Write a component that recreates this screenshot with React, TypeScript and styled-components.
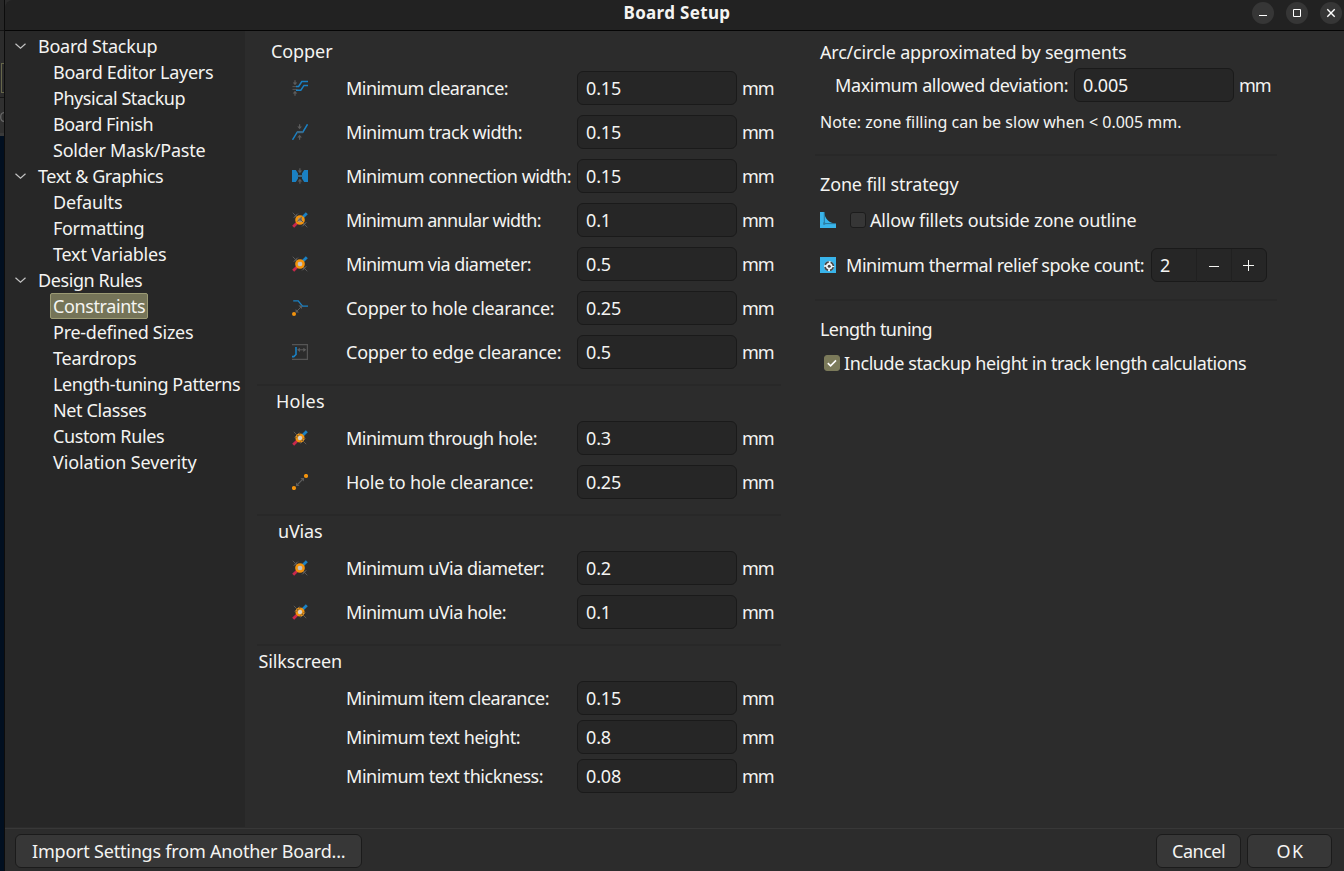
import React, { useLayoutEffect, useRef, useState } from "react";
import styled, { createGlobalStyle, css } from "styled-components";

const GlobalStyle = createGlobalStyle`
  * { box-sizing: border-box; }
  html, body { margin: 0; padding: 0; background: #2c2c2c; overflow: hidden; }
  body {
    font-family: "Noto Sans", "Open Sans", sans-serif;
    font-size: 18px;
    line-height: 26px;
    color: #f4f4f2;
  }
`;

const Screen = styled.div`
  display: flex;
  width: 1344px;
  height: 871px;
`;

/* Sliver of the editor window that shows behind the dialog */
const Backdrop = styled.div`
  display: flex;
  flex-direction: column;
  width: 5px;
  flex: none;
  background: #010f20;
  border-right: 1px solid #0c0c0c;
`;
const BackTop = styled.div`
  height: 31px;
  background: #272727;
  border-bottom: 1px solid #141414;
`;
const BackTools = styled.div`
  height: 67px;
  padding: 32px 0 0 1px;
  background: #2c2c2c;
  border-bottom: 1px solid #161616;
`;
const BackField = styled.div`
  height: 30px;
  border: 1px solid #66664a;
  border-right: 0;
`;
const BackLabel = styled.div`
  display: flex;
  height: 38px;
  padding-top: 13px;
  background: #303030;
  border-bottom: 3px solid #3a3a3a;
`;

const Dialog = styled.div`
  display: flex;
  flex-direction: column;
  flex: 1;
  background: #2c2c2c;
`;

const TitleBar = styled.header`
  display: grid;
  grid-template-columns: 1fr auto 1fr;
  height: 31px;
  flex: none;
  padding: 0 2px 5px 0;
  align-items: center;
  background: #222;
  border-bottom: 1px solid #050505;
  border-radius: 8px 0 0 0;
`;
const Title = styled.h1`
  grid-column: 2;
  margin: 0;
  padding-left: 6px;
  font-size: 17px;
  line-height: 25px;
  font-weight: 700;
`;
const WindowButtons = styled.div`
  display: flex;
  justify-content: flex-end;
  gap: 12px;
`;
const WindowButton = styled.button`
  display: grid;
  place-items: center;
  width: 22px;
  height: 22px;
  padding: 0;
  border: 0;
  border-radius: 50%;
  background: #363636;
  color: #fff;
`;

const Body = styled.div`
  display: flex;
  height: 797px;
  flex: none;
  border-bottom: 1px solid #2c2c2c;
`;
const Sidebar = styled.nav`
  width: 240px;
  flex: none;
  padding-top: 2px;
  background: #272727;
`;
const TreeRow = styled.div<{ $child?: boolean }>`
  display: flex;
  align-items: center;
  height: 26px;
  padding-left: ${(p) => (p.$child ? 45 : 9)}px;
  gap: 10px;
`;
const TreeLabel = styled.span<{ $selected?: boolean; $child?: boolean }>`
  display: flex;
  height: 26px;
  padding: 0 ${(p) => (p.$child ? 2 : 0)}px;
  border-radius: 2px;
  ${(p) =>
    p.$selected &&
    css`
      line-height: 24px;
      padding: 0 1px;
      background: #757458;
      border: 1px solid #9b9a74;
    `}
`;

const Content = styled.main`
  display: flex;
  flex: 1;
  gap: 34px;
  padding: 7px 0 0 12px;
`;
const LeftColumn = styled.div`
  width: 524px;
  flex: none;
`;
const RightColumn = styled.div`
  width: 462px;
  flex: none;
  padding-top: 1px;
`;
const Separator = styled.hr<{ $top: number; $bottom: number }>`
  height: 2px;
  margin: ${(p) => `${p.$top}px 0 ${p.$bottom}px`};
  border: 0;
  background: #282828;
`;

const GroupHeading = styled.h2<{ $indent?: number }>`
  display: flex;
  justify-content: center;
  width: 86px;
  margin: 0 0 7px;
  padding-left: ${(p) => p.$indent ?? 0}px;
  font-size: 18px;
  line-height: 26px;
  font-weight: 400;
`;
const Rows = styled.div<{ $gap: number }>`
  display: flex;
  flex-direction: column;
  gap: ${(p) => p.$gap}px;
`;
const Row = styled.label`
  display: grid;
  grid-template-columns: 86px 234px 160px auto;
  align-items: center;
  height: 34px;
`;
const RowIcon = styled.span`
  display: grid;
  place-items: center;
`;
const RowLabel = styled.span`
  display: flex;
  padding-left: 2px;
`;
const Field = styled.input`
  width: 160px;
  height: 34px;
  padding: 0 8px 0 8px;
  border: 1px solid #1a1a1a;
  border-radius: 6px;
  outline: 0;
  background: #262626;
  color: inherit;
  font: inherit;
  letter-spacing: -0.15px;
`;
const Unit = styled.span`
  display: flex;
  padding-left: 4px;
`;

const SideHeading = styled.h2`
  display: flex;
  margin: 0;
  padding-left: 4px;
  font-size: 18px;
  line-height: 26px;
  font-weight: 400;
`;
const DeviationRow = styled.label`
  display: flex;
  align-items: center;
  height: 34px;
  margin-top: 3px;
  padding-left: 19px;
  gap: 5px;
`;
const DeviationUnit = styled.span`
  display: flex;
  margin-left: -1px;
`;
const Note = styled.p`
  display: flex;
  margin: 7px 0 0;
  padding-left: 4px;
  font-size: 16px;
`;
const FilletRow = styled.label`
  display: flex;
  align-items: center;
  height: 26px;
  margin-top: 10px;
  padding-left: 5px;
`;
const CheckBox = styled.span<{ $checked?: boolean; $before: number }>`
  display: grid;
  place-items: center;
  width: 16px;
  height: 16px;
  margin: 0 3px 0 ${(p) => p.$before}px;
  border: 1px solid ${(p) => (p.$checked ? "#7b7a5a" : "#1c1c1c")};
  border-radius: 3px;
  background: ${(p) => (p.$checked ? "#7b7a5a" : "#363636")};
`;
const SpokeRow = styled.label`
  display: flex;
  align-items: center;
  height: 34px;
  margin-top: 15px;
  padding-left: 5px;
`;
const SpokeLabel = styled.span`
  display: flex;
  padding: 0 6px 0 9px;
`;
const Spinner = styled.span`
  display: grid;
  grid-template-columns: 44px 35px 35px;
  width: 116px;
  height: 34px;
  border: 1px solid #1a1a1a;
  border-radius: 6px;
  background: #262626;
  line-height: 33px;
`;
const SpinValue = styled.span`
  padding-left: 8px;
`;
const SpinButton = styled.span`
  display: grid;
  place-items: center;
  border-left: 1px solid #202020;
`;
const StackupRow = styled.label`
  display: flex;
  align-items: center;
  height: 26px;
  margin-top: 8px;
`;

const Footer = styled.footer`
  display: flex;
  flex: 1;
  align-items: flex-start;
  gap: 6px;
  padding: 5px 12px 0 10px;
  border-top: 1px solid #383838;
`;
const Button = styled.button<{ $width: number; $pushed?: boolean }>`
  display: flex;
  align-items: center;
  justify-content: center;
  width: ${(p) => p.$width}px;
  height: 34px;
  padding: 0;
  margin-left: ${(p) => (p.$pushed ? "auto" : "0")};
  border: 1px solid #1b1b1b;
  border-radius: 6px;
  background: #373737;
  color: inherit;
  font: inherit;
`;

const Line = styled.span`
  display: block;
  margin: 0 1px;
  white-space: nowrap;
`;

/* One line of text whose tracking is adjusted to occupy the given width,
   which includes one pixel of margin at either side */
function Fit({ width, children }: { width: number; children: string }) {
  const ref = useRef<HTMLSpanElement>(null);
  const [spacing, setSpacing] = useState(0);
  const inner = width - 2;
  useLayoutEffect(() => {
    const el = ref.current;
    if (!el) return;
    const range = document.createRange();
    range.selectNodeContents(el);
    const natural = range.getBoundingClientRect().width;
    setSpacing((inner + 0.6 - natural) / Math.max(1, children.length - 1));
  }, [inner, children]);
  return (
    <Line ref={ref} style={{ width: inner, letterSpacing: spacing }}>
      {children}
    </Line>
  );
}

const BLUE = "#1a81c4";
const ORANGE = "#f2930d";
const RED = "#c8284b";
const GREY = "#5c5c5c";

const Svg = ({ children }: { children: React.ReactNode }) => (
  <svg width="16" height="16" viewBox="0 0 16 16" fill="none">
    {children}
  </svg>
);

const Chevron = () => (
  <svg width="13" height="8" viewBox="0 0 13 8" fill="none">
    <path d="M1.5 1.8 6.5 6.2 11.5 1.8" stroke="#c4c4c4" strokeWidth="1.2" />
  </svg>
);

const PinchArrows = ({ x }: { x: number }) => (
  <g transform={`translate(${x} 0)`} fill={GREY}>
    <path d="M-.6 .3h1.2v2.2H2.3L0 5.2-2.3 2.5H-.6z" />
    <path d="M-.6 15.7h1.2v-2.2H2.3L0 10.8-2.3 13.5H-.6z" />
  </g>
);

const ClearanceIcon = () => (
  <Svg>
    <PinchArrows x={3} />
    <path d="M.5 6.6h5M.5 9.4h5" stroke={GREY} strokeWidth=".9" />
    <path d="M4 6.5h2.6L9.8 1.5H16M4 10.2h4.8L12 5.4H16" stroke={BLUE} strokeWidth="1.5" />
  </Svg>
);
const TrackIcon = () => (
  <Svg>
    <PinchArrows x={7.6} />
    <path d="M.5 15.8 5.2 8.2h5.6L15.5.3" stroke={BLUE} strokeWidth="1.5" />
    <path d="M5 8.1h6" stroke="#3c6a88" strokeWidth="2.2" />
  </Svg>
);
const ConnectionIcon = () => (
  <Svg>
    <path d="M0 2h3.8L6 5.5v5L3.8 14H0zM16 2h-3.8L10 5.5v5l2.2 3.5H16z" fill={BLUE} />
    <path d="M5.5 7h5v2h-5z" fill="#3d6a86" />
    <PinchArrows x={7.9} />
  </Svg>
);

const Diagonal = () => (
  <>
    <path d="M1.2 14.8 8 8" stroke={RED} strokeWidth="2.8" />
    <path d="M8 8 14.8 1.2" stroke={BLUE} strokeWidth="2.8" />
  </>
);
const CornerHatch = () => (
  <>
    <path d="M1.5 6 6 1.5M10 14.5 14.5 10M.7.7 4 4M15.3 15.3 12 12" stroke={GREY} strokeWidth=".9" />
    <path d="M4.8 1.8v3H1.8zM11.2 14.2v-3h3z" fill={GREY} />
  </>
);
const AnnularIcon = () => (
  <Svg>
    <CornerHatch />
    <Diagonal />
    <circle cx="8" cy="8" r="3.6" fill="#a9977d" stroke={ORANGE} strokeWidth="2.4" />
    <path d="M5.2 9.6 10 4.6M8.2 7.2l3 3" stroke="#5e574d" strokeWidth="1" />
    <path d="M9.6 5.8v2.6H6.8z" fill="#5b5b5b" />
  </Svg>
);
const ViaIcon = () => (
  <Svg>
    <CornerHatch />
    <Diagonal />
    <circle cx="8" cy="8" r="3.6" fill="#c3c3c3" stroke={ORANGE} strokeWidth="2.5" />
  </Svg>
);
const HoleIcon = () => (
  <Svg>
    <path d="M1.8 1.8 6 6M14.2 14.2 10 10M2.5 7.5l5-5M8.5 13.5l5-5" stroke={GREY} strokeWidth=".9" />
    <Diagonal />
    <circle cx="8" cy="8" r="3.4" fill="#d6d3cc" stroke={ORANGE} strokeWidth="2.4" />
    <path d="M4 8.2 8.2 4M7.8 12l4.2-4.2" stroke="#8a6429" strokeWidth=".8" />
    <path d="M3.6 3.6 5.9 5.9M12.4 12.4 10.1 10.1" stroke="#6b583c" strokeWidth="1" />
  </Svg>
);
const CopperHoleIcon = () => (
  <Svg>
    <path d="M1.2 .9h5l4.3 5.2H16" stroke={BLUE} strokeWidth="1.4" />
    <path d="M4.5 11.5 9 7" stroke={GREY} strokeWidth="1" />
    <path d="M10 5.5v3.6L6.4 5.5zM3.6 12.4V9l3.4 3.4z" fill={GREY} />
    <circle cx="2" cy="14" r="2" fill={ORANGE} />
  </Svg>
);
const CopperEdgeIcon = () => (
  <Svg>
    <path d="M0 .6h15.4v14.8H0" stroke="#555" strokeWidth="1.2" />
    <path d="M4 3v7.5L1.8 12.6H0" stroke={BLUE} strokeWidth="1.6" />
    <path d="M6.5 5.8h6" stroke={GREY} strokeWidth="1" />
    <path d="M5 5.8 8 3.7v4.2zM14.3 5.8l-3-2.1v4.2z" fill={GREY} />
  </Svg>
);
const HoleHoleIcon = () => (
  <Svg>
    <path d="M5 11 11 5" stroke={GREY} strokeWidth="1.1" />
    <path d="M12 4v3.6L8.4 4zM4 12V8.4L7.6 12z" fill={GREY} />
    <circle cx="14" cy="2" r="2.1" fill={ORANGE} />
    <circle cx="2" cy="14" r="2.1" fill={ORANGE} />
  </Svg>
);
const FilletIcon = () => (
  <Svg>
    <path d="M0 0h4.2C5 7 8.5 10.8 16 11.6V16H0z" fill="#39b4ea" />
    <path d="M4.3 0v11.6H16" stroke="#286f91" strokeWidth=".9" />
    <path d="M3.2 10.4h2v2.4h-2z" fill="#2d7ea3" />
  </Svg>
);
const ThermalIcon = () => (
  <Svg>
    <path d="M0 0h16v16H0z" fill="#39b4ea" />
    <circle cx="9.2" cy="9.2" r="5" fill="#eef3f5" />
    <circle cx="9.2" cy="9.2" r="4.2" stroke="#454545" strokeWidth="1.6" strokeDasharray="4.7 1.9" strokeDashoffset="-.95" />
    <circle cx="9.2" cy="9.2" r="1.5" fill="#404040" />
  </Svg>
);

type Limit = { label: string; width: number; value: string; icon?: React.FC };

const tree = [
  {
    label: "Board Stackup", width: 121,
    items: [["Board Editor Layers", 162], ["Physical Stackup", 134], ["Board Finish", 102], ["Solder Mask/Paste", 154]],
  },
  {
    label: "Text & Graphics", width: 127,
    items: [["Defaults", 71], ["Formatting", 93], ["Text Variables", 115]],
  },
  {
    label: "Design Rules", width: 106,
    items: [
      ["Constraints", 94], ["Pre-defined Sizes", 142], ["Teardrops", 85], ["Length-tuning Patterns", 189],
      ["Net Classes", 95], ["Custom Rules", 113], ["Violation Severity", 145],
    ],
  },
] as { label: string; width: number; items: [string, number][] }[];

const groups: { title: string; width: number; indent?: number; gap: number; rows: Limit[] }[] = [
  {
    title: "Copper", width: 63, indent: 3, gap: 10,
    rows: [
      { label: "Minimum clearance:", width: 164, value: "0.15", icon: ClearanceIcon },
      { label: "Minimum track width:", width: 178, value: "0.15", icon: TrackIcon },
      { label: "Minimum connection width:", width: 227, value: "0.15", icon: ConnectionIcon },
      { label: "Minimum annular width:", width: 197, value: "0.1", icon: AnnularIcon },
      { label: "Minimum via diameter:", width: 187, value: "0.5", icon: ViaIcon },
      { label: "Copper to hole clearance:", width: 210, value: "0.25", icon: CopperHoleIcon },
      { label: "Copper to edge clearance:", width: 217, value: "0.5", icon: CopperEdgeIcon },
    ],
  },
  {
    title: "Holes", width: 50, gap: 10,
    rows: [
      { label: "Minimum through hole:", width: 193, value: "0.3", icon: HoleIcon },
      { label: "Hole to hole clearance:", width: 189, value: "0.25", icon: HoleHoleIcon },
    ],
  },
  {
    title: "uVias", width: 46, gap: 10,
    rows: [
      { label: "Minimum uVia diameter:", width: 200, value: "0.2", icon: ViaIcon },
      { label: "Minimum uVia hole:", width: 162, value: "0.1", icon: HoleIcon },
    ],
  },
  {
    title: "Silkscreen", width: 85, gap: 5,
    rows: [
      { label: "Minimum item clearance:", width: 205, value: "0.15" },
      { label: "Minimum text height:", width: 176, value: "0.8" },
      { label: "Minimum text thickness:", width: 199, value: "0.08" },
    ],
  },
];

export default function App() {
  return (
    <Screen>
      <GlobalStyle />
      <Backdrop>
        <BackTop />
        <BackTools><BackField /></BackTools>
        <BackLabel>
          <svg width="4" height="12" viewBox="0 0 4 12" fill="none">
            <path d="M4 1.6C1.6 1.6.7 3.6.7 6S1.6 10.4 4 10.4" stroke="#666" strokeWidth="1.3" />
          </svg>
        </BackLabel>
      </Backdrop>
      <Dialog>
        <TitleBar>
          <Title><Fit width={108}>Board Setup</Fit></Title>
          <WindowButtons>
            <WindowButton aria-label="Minimize">
              <Svg><path d="M4 10.5h8" stroke="currentColor" /></Svg>
            </WindowButton>
            <WindowButton aria-label="Maximize">
              <Svg><path d="M4.5 4.5h7v7h-7z" stroke="currentColor" /></Svg>
            </WindowButton>
            <WindowButton aria-label="Close">
              <Svg><path d="m4.3 4.3 7.4 7.4m0-7.4-7.4 7.4" stroke="currentColor" strokeWidth="1.4" /></Svg>
            </WindowButton>
          </WindowButtons>
        </TitleBar>
        <Body>
          <Sidebar>
            {tree.map((branch) => (
              <React.Fragment key={branch.label}>
                <TreeRow>
                  <Chevron />
                  <TreeLabel><Fit width={branch.width}>{branch.label}</Fit></TreeLabel>
                </TreeRow>
                {branch.items.map(([label, width]) => (
                  <TreeRow key={label} $child>
                    <TreeLabel $child $selected={label === "Constraints"}>
                      <Fit width={width}>{label}</Fit>
                    </TreeLabel>
                  </TreeRow>
                ))}
              </React.Fragment>
            ))}
          </Sidebar>
          <Content>
            <LeftColumn>
              {groups.map((group, i) => (
                <React.Fragment key={group.title}>
                  {i > 0 && <Separator $top={15} $bottom={2} />}
                  <GroupHeading $indent={group.indent}><Fit width={group.width}>{group.title}</Fit></GroupHeading>
                  <Rows $gap={group.gap}>
                    {group.rows.map(({ label, width, value, icon: Icon }) => (
                      <Row key={label}>
                        <RowIcon>{Icon && <Icon />}</RowIcon>
                        <RowLabel><Fit width={width}>{label}</Fit></RowLabel>
                        <Field defaultValue={value} />
                        <Unit><Fit width={34}>mm</Fit></Unit>
                      </Row>
                    ))}
                  </Rows>
                </React.Fragment>
              ))}
            </LeftColumn>
            <RightColumn>
              <SideHeading><Fit width={308}>Arc/circle approximated by segments</Fit></SideHeading>
              <DeviationRow>
                <Fit width={235}>Maximum allowed deviation:</Fit>
                <Field defaultValue="0.005" />
                <DeviationUnit><Fit width={34}>mm</Fit></DeviationUnit>
              </DeviationRow>
              <Note><Fit width={363}>{"Note: zone filling can be slow when < 0.005 mm."}</Fit></Note>
              <Separator $top={19} $bottom={15} />
              <SideHeading><Fit width={140}>Zone fill strategy</Fit></SideHeading>
              <FilletRow>
                <FilletIcon />
                <CheckBox $before={14} />
                <Fit width={268}>Allow fillets outside zone outline</Fit>
              </FilletRow>
              <SpokeRow>
                <ThermalIcon />
                <SpokeLabel><Fit width={300}>Minimum thermal relief spoke count:</Fit></SpokeLabel>
                <Spinner>
                  <SpinValue>2</SpinValue>
                  <SpinButton>
                    <svg width="12" height="12" viewBox="0 0 12 12"><path d="M1 6.5h10" stroke="#f4f4f2" /></svg>
                  </SpinButton>
                  <SpinButton>
                    <svg width="12" height="12" viewBox="0 0 12 12"><path d="M0 5.5h11M5.5 0v11" stroke="#f4f4f2" /></svg>
                  </SpinButton>
                </Spinner>
              </SpokeRow>
              <Separator $top={17} $bottom={15} />
              <SideHeading><Fit width={114}>Length tuning</Fit></SideHeading>
              <StackupRow>
                <CheckBox $checked $before={9}>
                  <svg width="12" height="12" viewBox="0 0 12 12" fill="none">
                    <path d="M1.8 6.2 4.6 8.8 10 3.4" stroke="#fff" strokeWidth="1.6" />
                  </svg>
                </CheckBox>
                <Fit width={404}>Include stackup height in track length calculations</Fit>
              </StackupRow>
            </RightColumn>
          </Content>
        </Body>
        <Footer>
          <Button $width={347}><Fit width={315}>Import Settings from Another Board...</Fit></Button>
          <Button $width={85} $pushed><Fit width={55}>Cancel</Fit></Button>
          <Button $width={85}><Fit width={28}>OK</Fit></Button>
        </Footer>
      </Dialog>
    </Screen>
  );
}
